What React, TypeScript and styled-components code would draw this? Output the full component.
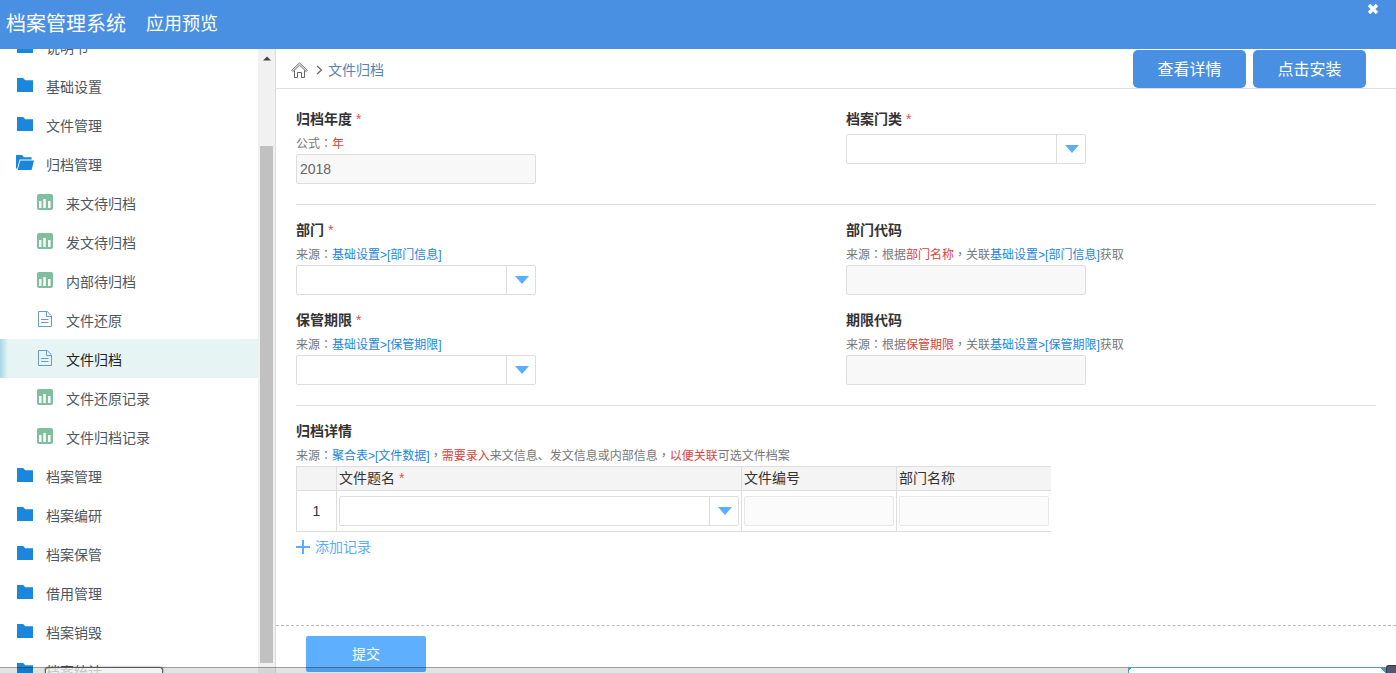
import React, { useId, useLayoutEffect, useRef } from "react";
import styled, { createGlobalStyle, css } from "styled-components";

const GlobalStyle = createGlobalStyle`
  *, *::before, *::after { box-sizing: border-box; }
  body {
    margin: 0;
    background: #fff;
    color: #333;
    font: 14px/20px "Liberation Sans", "Noto Sans CJK SC", sans-serif;
  }
  a { text-decoration: none; }
  button, input, select { font: inherit; }
`;

const Shell = styled.div`
  position: relative;
  display: flex;
  flex-direction: column;
  height: 100vh;
  overflow: hidden;
`;

const Header = styled.header`
  display: flex;
  flex: none;
  align-items: center;
  gap: 20px;
  height: 49px;
  padding: 0 17px 2px 6px;
  background: #4a90e2;
  color: #fff;
`;

const SystemName = styled.h1`
  margin: 0;
  font-size: 20px;
  font-weight: 400;
`;

const PreviewName = styled.span`
  font-size: 18px;
`;

const CloseButton = styled.button`
  display: flex;
  align-self: flex-start;
  margin: 3px 0 0 auto;
  padding: 0;
  border: 0;
  background: none;
  color: #fff;
  cursor: pointer;
`;

const Body = styled.div`
  display: flex;
  flex: 1;
  min-height: 0;
`;

const Sidebar = styled.aside`
  display: flex;
  flex: none;
  width: 276px;
  border-right: 1px solid #ddd;
`;

const NavList = styled.nav`
  flex: 1;
  overflow-y: auto;
  scrollbar-width: none;
`;

const NavItem = styled.a<{ $nested?: boolean; $active?: boolean }>`
  display: flex;
  align-items: center;
  gap: 12px;
  height: 39px;
  padding-left: ${(p) => (p.$nested ? 36 : 16)}px;
  color: #4c5560;

  ${(p) =>
    p.$active &&
    css`
      background: linear-gradient(90deg, #a9d6e6 0, #e6f5f4 8px);
      color: #222;
    `}

  svg {
    flex: none;
    margin-bottom: 2px;
  }
`;

const NavText = styled.span`
  padding-top: 2px;
`;

const ScrollTrack = styled.div`
  display: flex;
  flex: none;
  flex-direction: column;
  align-items: center;
  width: 17px;
  padding: 6px 2px 10px;
  background: #f1f1f1;
`;

const ScrollThumb = styled.div`
  flex: 1;
  align-self: stretch;
  margin-top: 85px;
  background: #c1c1c1;
`;

const Main = styled.main`
  display: flex;
  flex: 1;
  flex-direction: column;
  min-width: 0;
`;

const CrumbBar = styled.div`
  display: flex;
  flex: none;
  align-items: center;
  height: 40px;
  padding: 1px 30px 0 15px;
  border-bottom: 1px solid #ddd;
`;

const Crumbs = styled.nav`
  display: flex;
  flex: 1;
  align-items: center;
  gap: 5px;
  padding-top: 2px;

  a { display: flex; color: #5585b5; }
`;

const Actions = styled.div`
  display: flex;
  gap: 7px;
`;

const ActionButton = styled.button`
  width: 113px;
  height: 38px;
  padding: 2px 0 0;
  border: 0;
  border-radius: 5px;
  background: #4a90e2;
  color: #fff;
  font-size: 16px;
  cursor: pointer;
`;

const Form = styled.form`
  display: flex;
  flex: 1;
  flex-direction: column;
  min-height: 0;
`;

const Fields = styled.div`
  flex: 1;
  min-height: 0;
  padding: 5px 20px 0;
  overflow: hidden;
`;

const Section = styled.section`
  display: grid;
  grid-template-columns: 1fr 1fr;
  gap: 15px 20px;
  padding: 15px 0 20px;

  & + & { border-top: 1px solid #ddd; }
`;

const WideSection = styled(Section)`
  display: block;
`;

const FieldLabel = styled.label`
  display: block;
  margin-bottom: 5px;
  font-weight: 700;
`;

const Required = styled.span`
  color: #d9534f;
  font-weight: 400;
`;

const Hint = styled.div`
  color: #777;
  font-size: 12px;
  line-height: 20px;

  a { color: #1c86dc; }
  em { color: #d9433c; font-style: normal; }
`;

/* The Traditional Chinese face centres the full-width colon and comma. */
const Mark = styled.span.attrs({ lang: "zh-Hant" })`
  font-family: "Noto Sans CJK TC", sans-serif;
  line-height: 1;
`;

const TextInput = styled.input<{ $fill?: boolean }>`
  display: block;
  width: ${(p) => (p.$fill ? "100%" : "240px")};
  height: 30px;
  padding: 0 3px;
  border: 1px solid ${(p) => (p.$fill ? "#e8e8e8" : "#ddd")};
  border-radius: 2px;
  background: ${(p) => (p.$fill ? "#fbfbfb" : "#f8f8f8")};
  color: #666;
`;

const SelectBox = styled.div<{ $fill?: boolean }>`
  display: grid;
  grid-template-columns: 1fr 29px;
  width: ${(p) => (p.$fill ? "100%" : "240px")};
  height: 30px;
  border: 1px solid #ddd;
  border-radius: 2px;
  background: #fff;

  select {
    grid-area: 1 / 1 / 2 / 3;
    min-width: 0;
    padding: 0 32px 0 3px;
    border: 0;
    background: transparent;
    appearance: none;
  }
`;

const ArrowPane = styled.span`
  display: flex;
  grid-area: 1 / 2;
  align-items: center;
  justify-content: center;
  padding-left: 2px;
  border-left: 1px solid #ddd;
  pointer-events: none;
`;

const RecordTable = styled.table`
  width: 755px;
  max-width: 100%;
  table-layout: fixed;
  border-spacing: 0;
  border-bottom: 1px solid #ddd;

  th, td {
    padding: 0 2px;
    border-top: 1px solid #ddd;
    border-left: 1px solid #ddd;
    text-align: left;
  }
  th {
    height: 24px;
    padding-bottom: 2px;
    background: #f4f4f4;
    font-weight: 400;
  }
  td { height: 41px; }
  td:first-child { text-align: center; }
`;

const AddButton = styled.button`
  display: flex;
  align-items: center;
  gap: 5px;
  margin-top: 5px;
  padding: 0;
  border: 0;
  background: none;
  color: #5aaefc;
  cursor: pointer;
`;

const FormFooter = styled.footer`
  flex: none;
  height: 48px;
  padding: 10px 30px 0;
  border-top: 1px dashed #bbb;
`;

const SubmitButton = styled.button`
  width: 120px;
  height: 36px;
  border: 0;
  border-radius: 2px;
  background: #5eb0ff;
  color: #fff;
  cursor: pointer;
`;

const BottomStrip = styled.div`
  position: absolute;
  right: 0;
  bottom: 0;
  left: 0;
  height: 6px;
  border-top: 1px solid rgba(0, 0, 0, 0.3);
  background: rgba(0, 0, 0, 0.11);
`;

const StatusTab = styled.div`
  position: absolute;
  bottom: 0;
  left: 45px;
  width: 118px;
  height: 6px;
  border: 1px solid #555;
  border-bottom: 0;
  border-radius: 3px 3px 0 0;
  background: rgba(250, 250, 250, 0.7);
  box-shadow: 0 0 2px rgba(0, 0, 0, 0.5);
`;

const DockPanel = styled.div`
  position: absolute;
  right: 10px;
  bottom: 0;
  width: 258px;
  height: 6px;
  border: 1px solid #4f9fae;
  border-bottom: 0;
  background:
    linear-gradient(135deg, #4f9fae 2px, transparent 2px),
    linear-gradient(225deg, #4f9fae 3px, #fff 3px);
`;

const DockHandle = styled.div`
  position: absolute;
  right: 0;
  bottom: 0;
  width: 10px;
  height: 8px;
  border: 1px solid #33344a;
  border-width: 1px 0 0 1px;
  border-top-left-radius: 3px;
  background: #55566e;
`;

const FolderIcon = () => (
  <svg width="18" height="16" viewBox="0 0 18 16" fill="#1a87dc" aria-hidden="true">
    <path d="M1 1h6.2l2 2.2H17V15H1z" />
  </svg>
);

const OpenFolderIcon = () => (
  <svg width="18" height="16" viewBox="0 0 18 16" fill="#1a87dc" aria-hidden="true">
    <path d="M0 0h6l2 2.2h7.6v2.3H3.6L1.2 13.5H0z" />
    <path d="M4.3 5.6H18L15.6 15H1.6z" />
  </svg>
);

const ReportIcon = () => (
  <svg width="18" height="16" viewBox="0 0 18 16" aria-hidden="true">
    <rect x="1" width="16" height="16" rx="2" fill="#80bf9e" />
    <path d="M3 7h2.5v7H3zM7.3 5h2.5v9H7.3zM12 7h2.5v7H12z" fill="#fff" />
  </svg>
);

const DocIcon = () => (
  <svg width="18" height="16" viewBox="0 0 18 16" fill="none" stroke="#6b9aca" aria-hidden="true">
    <path d="M2.5.5h8.7l4.3 4.3v10.7h-13zM10.5.5v5h5M5 8.5h7.5M5 11.5h7.5" />
  </svg>
);

const HomeIcon = () => (
  <svg width="17" height="16" viewBox="0 0 17 16" fill="none" stroke="#555" strokeWidth=".9" aria-hidden="true">
    <path d="M.7 8.4 8.5.9l7.8 7.5-1.1 1.1L8.5 3.1 1.8 9.5zM3.5 8.5v7h3v-5h4v5h3v-7" />
  </svg>
);

const ChevronIcon = () => (
  <svg width="10" height="10" viewBox="0 0 10 10" fill="none" stroke="#666" strokeWidth="1.2" aria-hidden="true">
    <path d="m4 1 4.5 4L4 9" />
  </svg>
);

const icons = { folder: FolderIcon, open: OpenFolderIcon, report: ReportIcon, doc: DocIcon };

interface NavEntry {
  text: string;
  icon: keyof typeof icons;
  nested?: boolean;
  active?: boolean;
}

const navEntries: NavEntry[] = [
  { text: "说明书", icon: "folder" },
  { text: "基础设置", icon: "folder" },
  { text: "文件管理", icon: "folder" },
  { text: "归档管理", icon: "open" },
  { text: "来文待归档", icon: "report", nested: true },
  { text: "发文待归档", icon: "report", nested: true },
  { text: "内部待归档", icon: "report", nested: true },
  { text: "文件还原", icon: "doc", nested: true },
  { text: "文件归档", icon: "doc", nested: true, active: true },
  { text: "文件还原记录", icon: "report", nested: true },
  { text: "文件归档记录", icon: "report", nested: true },
  { text: "档案管理", icon: "folder" },
  { text: "档案编研", icon: "folder" },
  { text: "档案保管", icon: "folder" },
  { text: "借用管理", icon: "folder" },
  { text: "档案销毁", icon: "folder" },
  { text: "档案统计", icon: "folder" },
];

const SCROLL_OFFSET = 22;

function Navigation() {
  const list = useRef<HTMLElement>(null);
  useLayoutEffect(() => {
    if (list.current) list.current.scrollTop = SCROLL_OFFSET;
  }, []);

  return (
    <Sidebar>
      <NavList ref={list}>
        {navEntries.map(({ text, icon, nested, active }) => {
          const Icon = icons[icon];
          return (
            <NavItem key={text} href="#" $nested={nested} $active={active}>
              <Icon />
              <NavText>{text}</NavText>
            </NavItem>
          );
        })}
      </NavList>
      <ScrollTrack aria-hidden="true">
        <svg width="8" height="6" viewBox="0 0 8 6" fill="#444">
          <path d="M0 5.5 4 1.5l4 4z" />
        </svg>
        <ScrollThumb />
      </ScrollTrack>
    </Sidebar>
  );
}

function Dropdown({ id, fill, label }: { id?: string; fill?: boolean; label?: string }) {
  return (
    <SelectBox $fill={fill}>
      <select id={id} aria-label={label} />
      <ArrowPane>
        <svg width="14" height="8" viewBox="0 0 14 8" fill="#5aaefc" aria-hidden="true">
          <path d="M0 0h14L7 8z" />
        </svg>
      </ArrowPane>
    </SelectBox>
  );
}

interface FieldProps {
  label: string;
  required?: boolean;
  hint?: React.ReactNode;
  kind: "select" | "text";
  value?: string;
}

function Field({ label, required, hint, kind, value }: FieldProps) {
  const id = useId();
  return (
    <div>
      <FieldLabel htmlFor={id}>
        {label}
        {required && <Required> *</Required>}
      </FieldLabel>
      {hint && <Hint>{hint}</Hint>}
      {kind === "select" ? <Dropdown id={id} /> : <TextInput id={id} readOnly value={value ?? ""} />}
    </div>
  );
}

const Colon = () => <Mark>：</Mark>;
const Comma = () => <Mark>，</Mark>;

export default function App() {
  return (
    <Shell>
      <GlobalStyle />
      <Header>
        <SystemName>档案管理系统</SystemName>
        <PreviewName>应用预览</PreviewName>
        <CloseButton type="button" aria-label="关闭">
          <svg width="12" height="12" viewBox="0 0 12 12" stroke="currentColor" strokeWidth="3.4">
            <path d="m2 2 8 8m0-8-8 8" />
          </svg>
        </CloseButton>
      </Header>
      <Body>
        <Navigation />
        <Main>
          <CrumbBar>
            <Crumbs>
              <a href="#" aria-label="首页"><HomeIcon /></a>
              <ChevronIcon />
              <a href="#">文件归档</a>
            </Crumbs>
            <Actions>
              <ActionButton type="button">查看详情</ActionButton>
              <ActionButton type="button">点击安装</ActionButton>
            </Actions>
          </CrumbBar>
          <Form onSubmit={(e) => e.preventDefault()}>
            <Fields>
              <Section>
                <Field label="归档年度" required kind="text" value="2018" hint={<>公式<Colon /><em>年</em></>} />
                <Field label="档案门类" required kind="select" />
              </Section>
              <Section>
                <Field
                  label="部门"
                  required
                  kind="select"
                  hint={<>来源<Colon /><a href="#">基础设置&gt;[部门信息]</a></>}
                />
                <Field
                  label="部门代码"
                  kind="text"
                  hint={<>来源<Colon />根据<em>部门名称</em><Comma />关联<a href="#">基础设置&gt;[部门信息]</a>获取</>}
                />
                <Field
                  label="保管期限"
                  required
                  kind="select"
                  hint={<>来源<Colon /><a href="#">基础设置&gt;[保管期限]</a></>}
                />
                <Field
                  label="期限代码"
                  kind="text"
                  hint={<>来源<Colon />根据<em>保管期限</em><Comma />关联<a href="#">基础设置&gt;[保管期限]</a>获取</>}
                />
              </Section>
              <WideSection>
                <FieldLabel as="div">归档详情</FieldLabel>
                <Hint>
                  来源<Colon /><a href="#">聚合表&gt;[文件数据]</a><Comma /><em>需要录入</em>来文信息、发文信息或内部信息<Comma /><em>以便关联</em>可选文件档案
                </Hint>
                <RecordTable>
                  <colgroup>
                    <col width="40" />
                    <col />
                    <col width="155" />
                    <col width="155" />
                  </colgroup>
                  <thead>
                    <tr>
                      <th />
                      <th>文件题名<Required> *</Required></th>
                      <th>文件编号</th>
                      <th>部门名称</th>
                    </tr>
                  </thead>
                  <tbody>
                    <tr>
                      <td>1</td>
                      <td><Dropdown fill label="文件题名" /></td>
                      <td><TextInput $fill readOnly aria-label="文件编号" /></td>
                      <td><TextInput $fill readOnly aria-label="部门名称" /></td>
                    </tr>
                  </tbody>
                </RecordTable>
                <AddButton type="button">
                  <svg width="14" height="14" viewBox="0 0 14 14" stroke="currentColor" strokeWidth="2" aria-hidden="true">
                    <path d="M7 0v14M0 7h14" />
                  </svg>
                  添加记录
                </AddButton>
              </WideSection>
            </Fields>
            <FormFooter>
              <SubmitButton type="submit">提交</SubmitButton>
            </FormFooter>
          </Form>
        </Main>
      </Body>
      <BottomStrip />
      <StatusTab />
      <DockPanel />
      <DockHandle />
    </Shell>
  );
}
